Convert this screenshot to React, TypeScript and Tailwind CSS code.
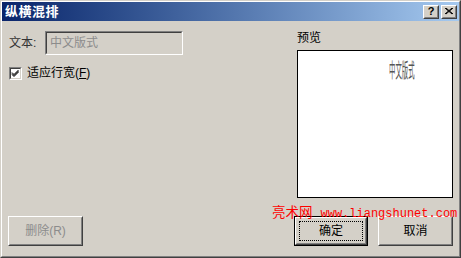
import React from "react";

const ui = { fontFamily: '"Liberation Sans", "Noto Sans CJK SC", sans-serif' };

function Raised({ children, className = "" }: { children?: React.ReactNode; className?: string }) {
  return (
    <div className={`border border-t-white border-l-white border-r-[#404040] border-b-[#404040] bg-[#d4d0c8] ${className}`}>
      <div className="w-full h-full border border-t-[#d4d0c8] border-l-[#d4d0c8] border-r-[#808080] border-b-[#808080] flex items-center justify-center">
        {children}
      </div>
    </div>
  );
}

function Sunken({ children, className = "" }: { children?: React.ReactNode; className?: string }) {
  return (
    <div className={`border border-t-[#808080] border-l-[#808080] border-r-white border-b-white ${className}`}>
      <div className="w-full h-full border border-t-[#404040] border-l-[#404040] border-r-[#d4d0c8] border-b-[#d4d0c8]">
        {children}
      </div>
    </div>
  );
}

export default function App() {
  return (
    <div
      className="relative w-[461px] h-[258px] bg-[#d4d0c8] border border-t-[#d4d0c8] border-l-[#d4d0c8] border-r-[#404040] border-b-[#404040] text-[12px] text-black"
      style={ui}
    >
      <div className="w-full h-full border border-t-white border-l-white border-r-[#808080] border-b-[#808080] flex flex-col">
        {/* title bar */}
        <div className="h-[19px] bg-gradient-to-r from-[#0a246a] to-[#a6caf0] flex items-center pl-[3px] pr-[2px]">
          <span className="text-white font-bold text-[13px] leading-none tracking-[0.5px]">纵横混排</span>
          <div className="ml-auto flex gap-[2px]">
            <Raised className="w-[16px] h-[14px]">
              <span className="font-bold text-[11px] leading-none" style={{ fontFamily: '"Liberation Sans", sans-serif' }}>?</span>
            </Raised>
            <Raised className="w-[16px] h-[14px]">
              <svg width="8" height="7" viewBox="0 0 8 7">
                <path d="M0 0 L7 6 M1 0 L8 6 M7 0 L0 6 M8 0 L1 6" stroke="black" strokeWidth="1" />
              </svg>
            </Raised>
          </div>
        </div>

        {/* body */}
        <div className="flex flex-1">
          <div className="flex flex-col pl-[7px] pt-[10px]">
            <div className="flex items-center">
              <span className="w-[36px] text-[#333]">文本:</span>
              <Sunken className="w-[138px] h-[24px]">
                <div className="h-full flex items-center pl-[3px] text-[#8c8c8c]">中文版式</div>
              </Sunken>
            </div>
            <div className="flex items-center mt-[9px]">
              <Sunken className="w-[13px] h-[13px] bg-white">
                <svg width="9" height="9" viewBox="0 0 9 9" className="bg-white">
                  <path d="M1 3.5 L3 5.5 L7.5 1 M1 4.5 L3 6.5 L7.5 2 M1 5.5 L3 7.5 L7.5 3" stroke="black" strokeWidth="1" fill="none" />
                </svg>
              </Sunken>
              <span className="ml-[5px]">
                适应行宽(<span className="underline">F</span>)
              </span>
            </div>
          </div>

          <div className="ml-auto mr-[6px] pt-[9px] w-[156px] flex flex-col">
            <span className="leading-[17px]">预览</span>
            <div className="mt-[3px] h-[148px] bg-white border border-black relative">
              <div className="absolute left-[91px] top-[10px] text-[20px] text-[#555] leading-none scale-x-[0.32] origin-left whitespace-nowrap">
                中文版式
              </div>
            </div>
          </div>
        </div>

        {/* buttons */}
        <div className="flex items-center pl-[6px] pr-[6px] pb-[10px]">
          <Raised className="w-[75px] h-[30px]">
            <span className="text-[#8c8c8c]">删除(R)</span>
          </Raised>
          <div className="ml-auto border border-black">
            <Raised className="w-[72px] h-[28px] !border-t-white">
              <div className="w-[64px] h-[20px] border border-dotted border-black flex items-center justify-center">确定</div>
            </Raised>
          </div>
          <Raised className="ml-[10px] w-[75px] h-[30px]">
            <span>取消</span>
          </Raised>
        </div>
      </div>

      {/* watermark */}
      <div className="absolute left-[271px] top-[200px] flex items-baseline text-[#ff0000] whitespace-nowrap">
        <span className="text-[13.5px]" style={{ fontFamily: '"Noto Sans CJK SC", sans-serif' }}>亮术网</span>
        <span className="ml-[8px] text-[12px]" style={{ fontFamily: '"Liberation Mono", monospace' }}>www.liangshunet.com</span>
      </div>
    </div>
  );
}
